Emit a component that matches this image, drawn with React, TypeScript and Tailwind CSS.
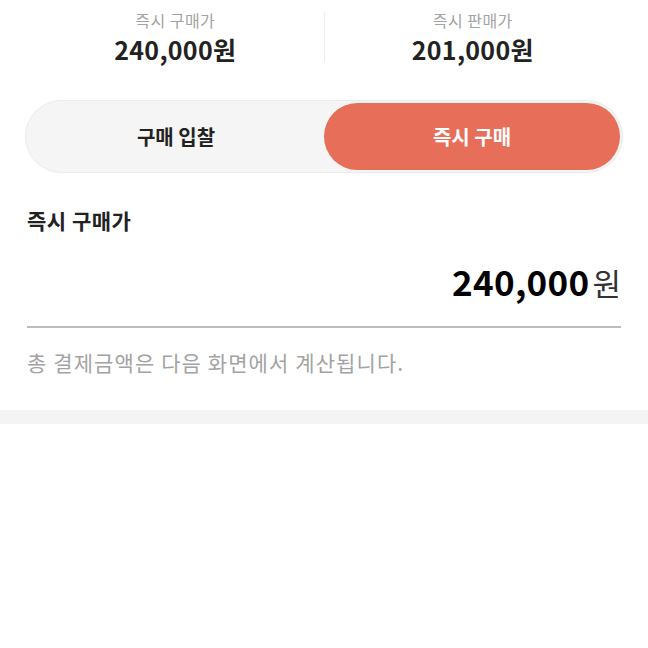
import React from "react";

const FONT = { fontFamily: '"Noto Sans CJK KR", "Noto Sans", sans-serif' };

function PriceCell({ label, value }: { label: string; value: string }) {
  return (
    <div className="flex flex-1 flex-col items-center">
      <span className="text-[16px] leading-[24px] tracking-[0.5px] text-[#a3a3a3]">{label}</span>
      <span className="mt-[1px] text-[25px] font-bold leading-[32px] tracking-[0.3px] text-[#222]">
        {value}
      </span>
    </div>
  );
}

export default function App() {
  return (
    <div className="h-[648px] w-[648px] bg-white" style={FONT}>
      <div className="flex items-stretch px-[27px] pt-[8px]">
        <PriceCell label="즉시 구매가" value="240,000원" />
        <div className="mt-[4px] mb-[3px] w-px bg-[#ececec]" />
        <PriceCell label="즉시 판매가" value="201,000원" />
      </div>

      <div className="px-[27px] pt-[35px]">
        <div className="-mx-[2px] flex h-[73px] rounded-full border border-[#ebebeb] bg-[#f5f5f5] p-[2px]">
          <button type="button" className="flex-1 rounded-full text-[20px] font-bold text-[#222]">
            구매 입찰
          </button>
          <button
            type="button"
            className="flex-1 rounded-full bg-[#e76e59] text-[20px] font-bold text-white"
          >
            즉시 구매
          </button>
        </div>

        <p className="mt-[32px] text-[21px] font-bold leading-[30px] tracking-[0.5px] text-[#222]">
          즉시 구매가
        </p>

        <div className="mt-[24px] flex items-baseline justify-end pb-[23px]">
          <span className="text-[35px] font-bold leading-[44px] tracking-[0.3px] text-black">240,000</span>
          <span className="ml-[3px] text-[31px] leading-[40px] text-[#333]">원</span>
        </div>
        <div className="h-[2px] bg-[#bdbdbd]" />

        <p className="mt-[19px] text-[21px] leading-[30px] tracking-[1.1px] text-[#a3a3a3]">
          총 결제금액은 다음 화면에서 계산됩니다.
        </p>
      </div>

      <div className="mt-[33px] h-[14px] bg-[#f4f4f4]" />
    </div>
  );
}
